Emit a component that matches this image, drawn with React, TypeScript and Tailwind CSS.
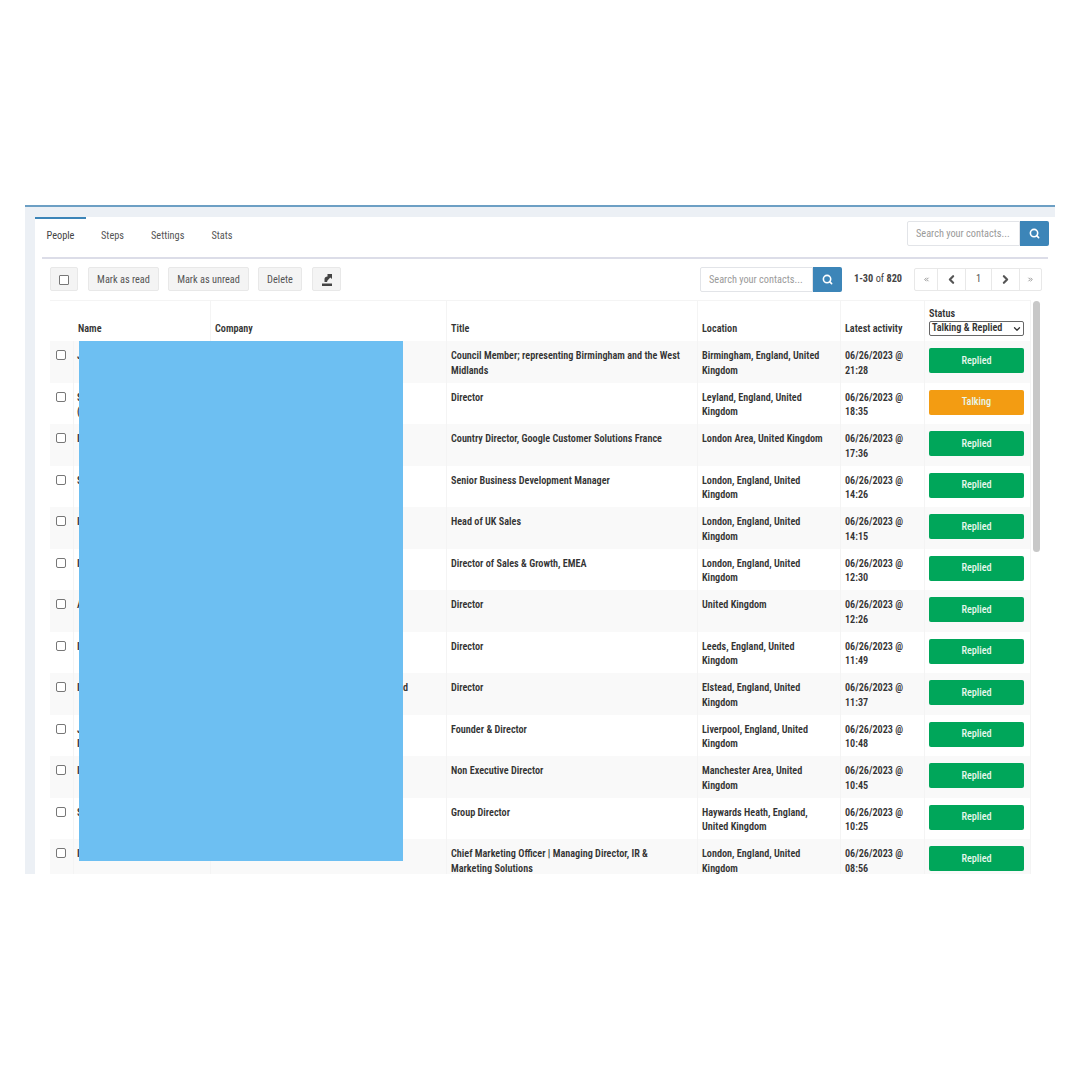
import { Search, ChevronDown, ChevronLeft, ChevronRight, ChevronsLeft, ChevronsRight } from "lucide-react"

const rows = [
  { initial: "J", extra: "", company: "", title: "Council Member; representing Birmingham and the West Midlands", location: "Birmingham, England, United Kingdom", date: "21:28", status: "Replied" },
  { initial: "S", extra: "(", company: "", title: "Director", location: "Leyland, England, United Kingdom", date: "18:35", status: "Talking" },
  { initial: "I", extra: "", company: "", title: "Country Director, Google Customer Solutions France", location: "London Area, United Kingdom", date: "17:36", status: "Replied" },
  { initial: "S", extra: "", company: "", title: "Senior Business Development Manager", location: "London, England, United Kingdom", date: "14:26", status: "Replied" },
  { initial: "I", extra: "", company: "", title: "Head of UK Sales", location: "London, England, United Kingdom", date: "14:15", status: "Replied" },
  { initial: "I", extra: "", company: "", title: "Director of Sales & Growth, EMEA", location: "London, England, United Kingdom", date: "12:30", status: "Replied" },
  { initial: "A", extra: "", company: "", title: "Director", location: "United Kingdom", date: "12:26", status: "Replied" },
  { initial: "I", extra: "", company: "", title: "Director", location: "Leeds, England, United Kingdom", date: "11:49", status: "Replied" },
  { initial: "I", extra: "", company: "d", title: "Director", location: "Elstead, England, United Kingdom", date: "11:37", status: "Replied" },
  { initial: "J", extra: "I", company: "", title: "Founder & Director", location: "Liverpool, England, United Kingdom", date: "10:48", status: "Replied" },
  { initial: "I", extra: "", company: "", title: "Non Executive Director", location: "Manchester Area, United Kingdom", date: "10:45", status: "Replied" },
  { initial: "S", extra: "", company: "", title: "Group Director", location: "Haywards Heath, England, United Kingdom", date: "10:25", status: "Replied" },
  { initial: "I", extra: "", company: "", title: "Chief Marketing Officer | Managing Director, IR & Marketing Solutions", location: "London, England, United Kingdom", date: "08:56", status: "Replied" },
]

const gridCols = "grid grid-cols-[23px_137px_236px_251px_143px_84px_106px]"

function SearchBox({ width }: { width: string }) {
  return (
    <div className="flex h-[25px]">
      <div className={`${width} flex items-center border border-[#e2e4e8] rounded-l-[2px] pl-2 pt-px text-[#9a9a9a]`}>
        Search your contacts...
      </div>
      <div className="w-[29px] flex items-center justify-center bg-[#3c85b8] rounded-r-[2px] text-white">
        <Search size={11} strokeWidth={3.5} />
      </div>
    </div>
  )
}

function ToolButton({ children, className }: { children: React.ReactNode; className: string }) {
  return (
    <div className={`${className} h-6 flex items-center justify-center bg-[#f4f4f4] border border-[#e8e8e8] rounded-[2px] pt-px text-[#555]`}>
      {children}
    </div>
  )
}

function ExportIcon() {
  return (
    <svg width="12" height="13" viewBox="0 0 12 13" className="text-[#444]">
      <path d="M1 10.5h10V13H1z" fill="currentColor" />
      <path d="M3.5 9V6C3.5 4.5 4.7 3.5 6.5 3.5V1L11 1v5L9.3 4.6 6.5 7.4 6 9z" fill="currentColor" />
    </svg>
  )
}

export default function App() {
  return (
    <div className="bg-white h-[1080px] pt-[205px] px-[25px] opacity-[0.999] font-['Roboto',sans-serif] [font-stretch:75%] text-[10.3px] text-[#333]">
      <div className="relative h-[669px] overflow-hidden border-t-2 border-[#6c9fc4] bg-[#ecf0f5] pt-[10px] pl-[10px]">
        <div className="bg-white h-full">
          <div className="flex items-center justify-between h-[32px] pr-[6px]">
            <div className="flex h-full">
              <div className="w-[51px] flex items-center justify-center border-t-2 border-[#3c85b8] text-[#444] pt-[3px]">People</div>
              <div className="flex items-center gap-[27px] pl-[15px] pt-[5px] text-[#555]">
                <span>Steps</span>
                <span>Settings</span>
                <span>Stats</span>
              </div>
            </div>
            <SearchBox width="w-[113px]" />
          </div>

          <div className="ml-[7px] mr-[7px] mt-[8px] h-[2px] bg-[#dcdde8]" />

          <div className="flex items-center h-[24px] mt-[8px] ml-[15px] mr-[13px]">
            <ToolButton className="w-[28px]">
              <span className="w-[10px] h-[10px] border border-[#777] rounded-[1px] bg-white" />
            </ToolButton>
            <ToolButton className="w-[71px] ml-[10px]">Mark as read</ToolButton>
            <ToolButton className="w-[81px] ml-[9px]">Mark as unread</ToolButton>
            <ToolButton className="w-[44px] ml-[9px]">Delete</ToolButton>
            <ToolButton className="w-[29px] ml-[10px]">
              <ExportIcon />
            </ToolButton>
            <div className="ml-auto flex items-center">
              <SearchBox width="w-[113px]" />
              <span className="w-[72px] text-center text-[#444]">
                <b>1-30</b> of <b>820</b>
              </span>
              <div className="flex h-[23px] border border-[#e8e8e8] rounded-[2px] text-[#555]">
                <span className="w-[22px] flex items-center justify-center text-[#888]"><ChevronsLeft size={7} strokeWidth={3} /></span>
                <span className="w-[28px] flex items-center justify-center border-l border-[#e8e8e8]"><ChevronLeft size={13} strokeWidth={4} /></span>
                <span className="w-[26px] flex items-center justify-center border-l border-[#e8e8e8]">1</span>
                <span className="w-[28px] flex items-center justify-center border-l border-[#e8e8e8]"><ChevronRight size={13} strokeWidth={4} /></span>
                <span className="w-[22px] flex items-center justify-center border-l border-[#e8e8e8] text-[#888]"><ChevronsRight size={7} strokeWidth={3} /></span>
              </div>
            </div>
          </div>

          <div className="ml-[15px] mt-[9px] w-[981px] border-r border-[#f4f4f4] font-semibold text-[10.2px] text-[#333] leading-[14.5px]">
            <div className={`${gridCols} h-[41px] border-t border-[#f4f4f4]`}>
              <div />
              <div className="flex items-end pl-[5px] pb-[5px]">Name</div>
              <div className="flex items-end pl-[4px] pb-[5px] border-l border-[#f4f4f4]">Company</div>
              <div className="flex items-end pl-[4px] pb-[5px] border-l border-[#f4f4f4]">Title</div>
              <div className="flex items-end pl-[4px] pb-[5px] border-l border-[#f4f4f4]">Location</div>
              <div className="flex items-end pl-[4px] pb-[5px] border-l border-[#f4f4f4]">Latest activity</div>
              <div className="pl-[4px] pt-[6px] border-l border-[#f4f4f4]">
                <div className="leading-[14px]">Status</div>
                <div className="flex items-center justify-between w-[95px] h-[15px] pl-[2px] pr-[1px] border border-[#666] rounded-[2px] bg-white">
                  <span>Talking &amp; Replied</span>
                  <ChevronDown size={10} strokeWidth={3} />
                </div>
              </div>
            </div>

            {rows.map((row, i) => (
              <div key={i} className={`${gridCols} h-[41.5px] ${i % 2 === 0 ? "bg-[#f9f9f9]" : "bg-white"}`}>
                <div className="pl-[6px] pt-[9px]">
                  <span className="block w-[10px] h-[10px] border border-[#777] rounded-[2px] bg-white" />
                </div>
                <div className="pl-[3px] pt-[8px] border-l border-[#f4f4f4]">
                  {row.initial}
                  {row.extra && <div>{row.extra}</div>}
                </div>
                <div className="pt-[8px] pl-[192px] border-l border-[#f4f4f4]">{row.company}</div>
                <div className="pl-[4px] pr-[8px] pt-[8px] border-l border-[#f4f4f4]">{row.title}</div>
                <div className="pl-[4px] pr-[8px] pt-[8px] border-l border-[#f4f4f4]">{row.location}</div>
                <div className="pl-[4px] pr-[8px] pt-[8px] border-l border-[#f4f4f4]">06/26/2023 @ {row.date}</div>
                <div className="pl-[4px] pt-[7px] border-l border-[#f4f4f4]">
                  <div className={`w-[95px] h-[25px] flex items-center justify-center rounded-[2px] pt-px font-medium text-[#e6f7ec] ${row.status === "Talking" ? "bg-[#f39c12]" : "bg-[#00a65a]"}`}>
                    {row.status}
                  </div>
                </div>
              </div>
            ))}
          </div>
        </div>

        <div className="absolute left-[54px] top-[134px] w-[324px] h-[520px] bg-[#6dbff2]" />
        <div className="absolute left-[1008px] top-[94px] w-[7px] h-[251px] rounded-full bg-[#c8c8c8]" />
      </div>
    </div>
  )
}
